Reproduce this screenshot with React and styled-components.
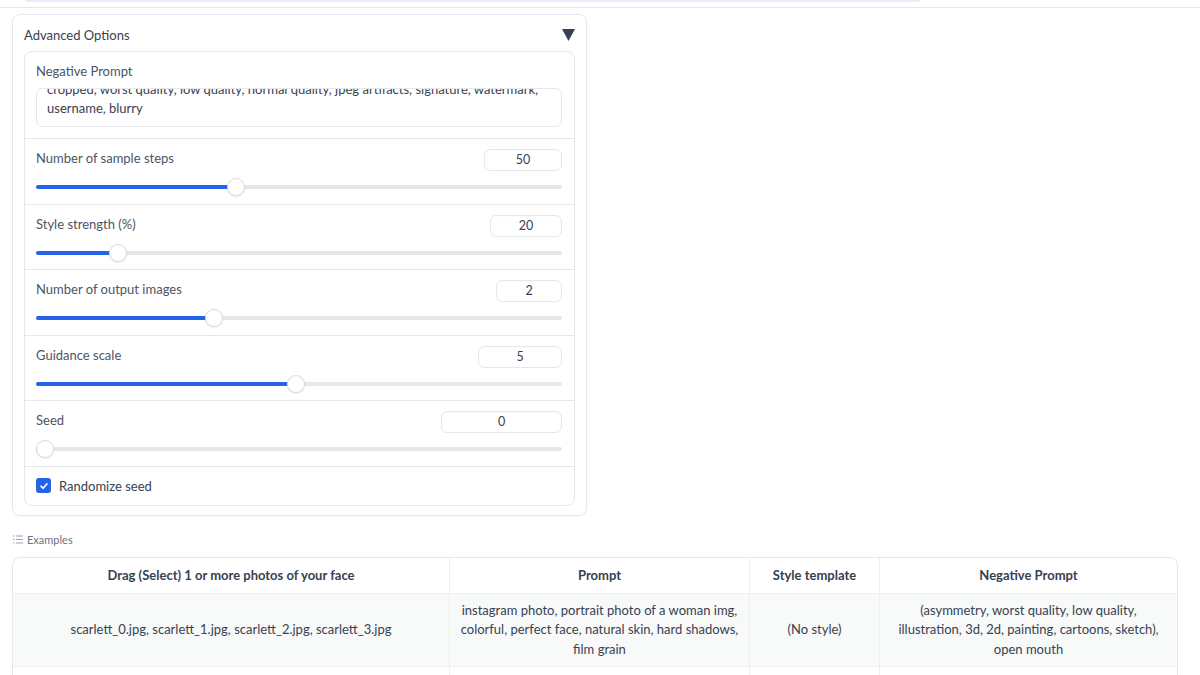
import React from "react";
import styled, { createGlobalStyle } from "styled-components";

const Global = createGlobalStyle`
  html, body { margin: 0; padding: 0; background: #fff; }
  body { font-family: "Lato", "Noto Sans", sans-serif; color: #374151; }
  * { box-sizing: border-box; }
`;

const Page = styled.div`
  width: 1200px;
  height: 675px;
  overflow: hidden;
  display: flex;
  flex-direction: column;
  & > * { flex-shrink: 0; }
`;

const TopStrip = styled.div`
  margin-left: 25px;
  width: 895px;
  height: 2px;
  background: #e8ecfb;
  border-radius: 0 0 3px 3px;
`;

const TopRule = styled.div`
  margin-top: 5px;
  height: 1px;
  background: #e5e7eb;
`;

const Content = styled.div`
  padding: 6px 22px 0 12px;
  display: flex;
  flex-direction: column;
  & > * { flex-shrink: 0; }
`;

const Panel = styled.section`
  width: 575px;
  border: 1px solid #e5e7eb;
  border-radius: 8px;
  padding: 10px 11px 9px;
  box-shadow: 0 1px 2px rgba(0,0,0,0.03);
`;

const PanelHead = styled.div`
  display: flex;
  justify-content: space-between;
  align-items: center;
  height: 20px;
  margin-bottom: 6px;
  font-size: 13px;
  color: #374151;
`;

const Caret = styled.svg`
  width: 13px;
  height: 12px;
`;

const Inner = styled.div`
  border: 1px solid #e5e7eb;
  border-radius: 8px;
  display: flex;
  flex-direction: column;
`;

const Section = styled.div`
  padding: ${(p) => p.$pad || "10px 12px 6.6px 11px"};
  border-top: ${(p) => (p.$first ? "none" : "1px solid #e5e7eb")};
  display: flex;
  flex-direction: column;
`;

const Label = styled.span`
  font-size: 13px;
  line-height: 18px;
  color: #4b5563;
`;

const Row = styled.div`
  display: flex;
  justify-content: space-between;
  align-items: flex-start;
  height: 22px;
`;

const NumBox = styled.div`
  width: ${(p) => p.$w}px;
  height: 22px;
  border: 1px solid #e5e7eb;
  border-radius: 6px;
  font-size: 12.5px;
  line-height: 20px;
  text-align: center;
  color: #374151;
  box-shadow: inset 0 1px 2px rgba(0,0,0,0.02);
`;

const SliderWrap = styled.div`
  position: relative;
  margin-top: 6px;
  height: 20px;
`;

const Track = styled.div`
  position: absolute;
  left: 0;
  right: 0;
  top: 8px;
  height: 4px;
  border-radius: 2px;
  background: #e5e7eb;
`;

const Fill = styled.div`
  position: absolute;
  left: 0;
  top: 8px;
  height: 4px;
  border-radius: 2px;
  background: #2563eb;
`;

const Thumb = styled.div`
  position: absolute;
  top: 1px;
  width: 18px;
  height: 18px;
  margin-left: -9px;
  border-radius: 50%;
  background: #fff;
  border: 1px solid #d7dbe0;
  box-shadow: 0 1px 2px rgba(0,0,0,0.08);
`;

const TextArea = styled.div`
  margin-top: 8px;
  height: 39px;
  border: 1px solid #e5e7eb;
  border-radius: 6px;
  padding: 0 10px 8px;
  overflow: hidden;
  display: flex;
  flex-direction: column;
  justify-content: flex-end;
  font-size: 13px;
  line-height: 19px;
  color: #374151;
  white-space: pre-line;
`;

const CheckRow = styled.label`
  display: flex;
  align-items: center;
  gap: 8px;
  height: 39px;
  padding: 0 12px 0 11px;
  border-top: 1px solid #e5e7eb;
  font-size: 13px;
  color: #374151;
`;

const Box = styled.span`
  width: 15px;
  height: 15px;
  border-radius: 3px;
  background: #2563eb;
  display: inline-flex;
  align-items: center;
  justify-content: center;
`;

const ExamplesTitle = styled.div`
  margin-top: 16px;
  height: 16px;
  display: flex;
  align-items: center;
  gap: 4px;
  font-size: 11px;
  color: #6b7280;
  padding-left: 1px;
`;

const Table = styled.div`
  margin-top: 9px;
  width: 1166px;
  border: 1px solid #e5e7eb;
  border-radius: 8px;
  overflow: hidden;
  display: grid;
  grid-template-columns: 436px 300px 130px 1fr;
`;

const Th = styled.div`
  height: 36px;
  display: flex;
  align-items: center;
  justify-content: center;
  font-size: 13px;
  font-weight: 700;
  color: #374151;
  border-left: ${(p) => (p.$first ? "none" : "1px solid #eceef1")};
  border-bottom: 1px solid #eceef1;
`;

const Td = styled.div`
  min-height: 73px;
  padding: 6px 10px;
  display: flex;
  align-items: center;
  justify-content: center;
  text-align: center;
  font-size: 13px;
  line-height: 19.5px;
  color: #374151;
  background: ${(p) => (p.$alt ? "#f8f9f9" : "#fff")};
  border-left: ${(p) => (p.$first ? "none" : "1px solid #eceef1")};
  border-bottom: 1px solid #eceef1;
`;

const sliders = [
  { label: "Number of sample steps", value: "50", w: 78, f: 0.375 },
  { label: "Style strength (%)", value: "20", w: 72, f: 0.143 },
  { label: "Number of output images", value: "2", w: 66, f: 0.333 },
  { label: "Guidance scale", value: "5", w: 84, f: 0.495 },
  { label: "Seed", value: "0", w: 121, f: 0 },
];

function Slider({ f }) {
  const pos = `calc(9px + ${f} * (100% - 18px))`;
  return (
    <SliderWrap>
      <Track />
      <Fill style={{ width: pos }} />
      <Thumb style={{ left: pos }} />
    </SliderWrap>
  );
}

const rows = [
  {
    a: "scarlett_0.jpg, scarlett_1.jpg, scarlett_2.jpg, scarlett_3.jpg",
    b: "instagram photo, portrait photo of a woman img, colorful, perfect face, natural skin, hard shadows, film grain",
    c: "(No style)",
    d: "(asymmetry, worst quality, low quality, illustration, 3d, 2d, painting, cartoons, sketch), open mouth",
  },
  {
    a: "newton_0.jpeg, newton_1.jpeg, newton_2.jpeg, newton_3.jpeg",
    b: "sci-fi, closeup portrait photo of a man img wearing the sunglasses in Iron man suit, face, slim body, high quality, film grain",
    c: "(No style)",
    d: "(asymmetry, worst quality, low quality, illustration, 3d, 2d, painting, cartoons, sketch), open mouth",
  },
];

const negText =
  "cropped, worst quality, low quality, normal quality, jpeg artifacts, signature, watermark,\n" +
  "username, blurry";

export default function App() {
  return (
    <Page>
      <Global />
      <TopStrip />
      <TopRule />
      <Content>
        <Panel>
          <PanelHead>
            <span>Advanced Options</span>
            <Caret viewBox="0 0 13 12">
              <polygon points="0,0 13,0 6.5,12" fill="#374151" />
            </Caret>
          </PanelHead>
          <Inner>
            <Section $first $pad="10px 12px 11px 11px">
              <Label>Negative Prompt</Label>
              <TextArea>
                <div>{negText}</div>
              </TextArea>
            </Section>
            {sliders.map((s) => (
              <Section key={s.label}>
                <Row>
                  <Label>{s.label}</Label>
                  <NumBox $w={s.w}>{s.value}</NumBox>
                </Row>
                <Slider f={s.f} />
              </Section>
            ))}
            <CheckRow>
              <Box>
                <svg width="10" height="10" viewBox="0 0 10 10">
                  <path d="M2 5.2 L4.2 7.3 L8 2.8" stroke="#fff" strokeWidth="1.6" fill="none" strokeLinecap="round" strokeLinejoin="round" />
                </svg>
              </Box>
              Randomize seed
            </CheckRow>
          </Inner>
        </Panel>
        <ExamplesTitle>
          <svg width="10" height="9" viewBox="0 0 10 9">
            <g stroke="#9ca3af" strokeWidth="1">
              <line x1="0" y1="1" x2="1.5" y2="1" />
              <line x1="3" y1="1" x2="10" y2="1" />
              <line x1="0" y1="4.5" x2="1.5" y2="4.5" />
              <line x1="3" y1="4.5" x2="10" y2="4.5" />
              <line x1="0" y1="8" x2="1.5" y2="8" />
              <line x1="3" y1="8" x2="10" y2="8" />
            </g>
          </svg>
          Examples
        </ExamplesTitle>
        <Table>
          <Th $first>Drag (Select) 1 or more photos of your face</Th>
          <Th>Prompt</Th>
          <Th>Style template</Th>
          <Th>Negative Prompt</Th>
          {rows.map((r, i) => (
            <React.Fragment key={i}>
              <Td $first $alt={i === 0}>{r.a}</Td>
              <Td $alt={i === 0}>{r.b}</Td>
              <Td $alt={i === 0}>{r.c}</Td>
              <Td $alt={i === 0}>{r.d}</Td>
            </React.Fragment>
          ))}
        </Table>
      </Content>
    </Page>
  );
}
